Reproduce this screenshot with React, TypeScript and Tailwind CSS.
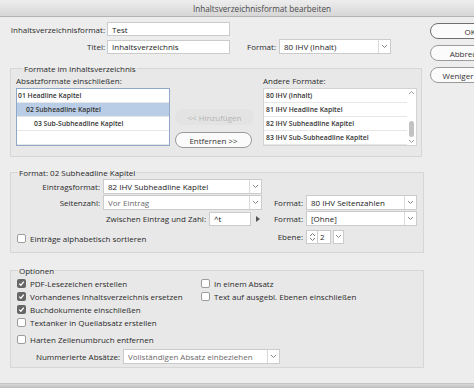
import React from "react";

const Chevron = ({ c = "#8a8a8a" }: { c?: string }) => (
  <svg width="7" height="5" viewBox="0 0 7 5">
    <path d="M1 1 L3.5 3.5 L6 1" fill="none" stroke={c} strokeWidth="1" />
  </svg>
);

const ChevronUp = ({ c = "#8a8a8a" }: { c?: string }) => (
  <svg width="7" height="5" viewBox="0 0 7 5">
    <path d="M1 4 L3.5 1.5 L6 4" fill="none" stroke={c} strokeWidth="1" />
  </svg>
);

function Select({ w, text, muted }: { w: string; text: string; muted?: boolean }) {
  return (
    <div className={`${w} h-[15px] flex bg-white border border-[#cbcbcb]`}>
      <div className={`flex-1 flex items-center pl-[4px] overflow-hidden whitespace-nowrap ${muted ? "text-[#6a6a6a]" : "text-[#222]"}`}>
        {text}
      </div>
      <div className="w-[12px] border-l border-[#dadada] flex items-center justify-center">
        <Chevron />
      </div>
    </div>
  );
}

function Input({ w, text }: { w: string; text: string }) {
  return (
    <div className={`${w} h-[14px] flex items-center pl-[4px] bg-white border border-[#cbcbcb] text-[#222] whitespace-nowrap`}>
      {text}
    </div>
  );
}

function Checkbox({ checked, label }: { checked?: boolean; label: string }) {
  return (
    <div className="flex items-center h-[13px] gap-[4px] whitespace-nowrap">
      {checked ? (
        <div className="w-[9px] h-[9px] rounded-[2px] bg-[#666] flex items-center justify-center">
          <svg width="7" height="7" viewBox="0 0 7 7">
            <path d="M1.2 3.6 L2.9 5.2 L5.8 1.6" fill="none" stroke="#fff" strokeWidth="1.3" />
          </svg>
        </div>
      ) : (
        <div className="w-[9px] h-[9px] rounded-[2px] bg-white border border-[#9d9d9d]" />
      )}
      <span>{label}</span>
    </div>
  );
}

function PillButton({ children, disabled, strong, w }: { children: React.ReactNode; disabled?: boolean; strong?: boolean; w: string }) {
  return (
    <div
      className={`${w} h-[16px] shrink-0 rounded-full flex items-center justify-center whitespace-nowrap ${
        disabled
          ? "bg-[#e3e3e3] text-[#b4b4b4]"
          : strong
          ? "bg-[#fbfbfb] border border-[#6f6f6f] text-[#333]"
          : "bg-[#fbfbfb] border border-[#9a9a9a] text-[#333]"
      }`}
    >
      {children}
    </div>
  );
}

function ListRow({ children, sel, pl }: { children?: React.ReactNode; sel?: boolean; pl: string }) {
  return (
    <div
      className={`h-[14px] flex items-center ${pl} border-b border-[#e6e6e6] whitespace-nowrap font-semibold text-[6.8px] text-[#333] ${
        sel ? "bg-[#b9cde6]" : ""
      }`}
    >
      {children}
    </div>
  );
}

export default function App() {
  return (
    <div className="w-[474px] h-[388px] overflow-hidden bg-[#ededed] flex flex-col font-['Open_Sans',sans-serif] text-[8px] text-[#2a2a2a] leading-[11px]">
      {/* title bar */}
      <div className="h-[17px] shrink-0 flex items-center justify-center pl-[50px] bg-gradient-to-b from-[#eeeeee] to-[#d6d6d6] border-b border-[#b3b3b3] text-[8.2px] text-[#4a4a4a] whitespace-nowrap">
        Inhaltsverzeichnisformat bearbeiten
      </div>

      <div className="flex flex-1">
        {/* left */}
        <div className="w-[424px] shrink-0 pl-[10px] pt-[5px]">
          <div className="flex items-center h-[14px]">
            <div className="w-[95px] text-right">Inhaltsverzeichnisformat:</div>
            <div className="ml-[2px]">
              <Input w="w-[123px]" text="Test" />
            </div>
          </div>
          <div className="flex items-center h-[15px] mt-[3px]">
            <div className="w-[95px] text-right">Titel:</div>
            <div className="ml-[2px]">
              <Input w="w-[123px]" text="Inhaltsverzeichnis" />
            </div>
            <div className="ml-[17px]">Format:</div>
            <div className="ml-[3px]">
              <Select w="w-[112px]" text="80 IHV (Inhalt)" />
            </div>
          </div>

          {/* group 1 */}
          <fieldset className="mt-[9px] w-[412px] border border-[#d6d6d6] bg-[#e8e8e8] pl-[5px] pb-[10px]">
            <legend className="ml-[7px] px-[1px] leading-[11px]">Formate im Inhaltsverzeichnis</legend>
            <div className="flex items-end">
              <div className="w-[154px]">
                <div className="h-[11px] mt-[1px] mb-[2px] whitespace-nowrap">Absatzformate einschließen:</div>
                <div className="h-[58px] bg-white border border-[#8fa7c9]">
                  <ListRow pl="pl-[1px]">01 Headline Kapitel</ListRow>
                  <ListRow pl="pl-[9px]" sel>
                    02 Subheadline Kapitel
                  </ListRow>
                  <ListRow pl="pl-[17px]">03 Sub-Subheadline Kapitel</ListRow>
                  <ListRow pl="pl-[1px]" />
                </div>
              </div>
              <div className="ml-[5px] w-[81px] flex flex-col gap-[7px] mb-[-2px]">
                <PillButton w="w-[79px]" disabled>
                  &lt;&lt; Hinzufügen
                </PillButton>
                <PillButton w="w-[77px]">Entfernen &gt;&gt;</PillButton>
              </div>
              <div className="ml-[7px] w-[154px]">
                <div className="h-[11px] mt-[1px] mb-[2px] whitespace-nowrap">Andere Formate:</div>
                <div className="h-[58px] bg-white border border-[#d3d3d3] flex">
                  <div className="flex-1">
                    <ListRow pl="pl-[2px]">80 IHV (Inhalt)</ListRow>
                    <ListRow pl="pl-[2px]">81 IHV Headline Kapitel</ListRow>
                    <ListRow pl="pl-[2px]">82 IHV Subheadline Kapitel</ListRow>
                    <ListRow pl="pl-[2px]">83 IHV Sub-Subheadline Kapitel</ListRow>
                  </div>
                  <div className="w-[9px] flex flex-col items-center justify-between py-[1px]">
                    <ChevronUp c="#9a9a9a" />
                    <div className="flex-1 flex flex-col justify-end pb-[2px]">
                      <div className="w-[5px] h-[16px] rounded-full bg-[#c2c2c2]" />
                    </div>
                    <Chevron c="#9a9a9a" />
                  </div>
                </div>
              </div>
            </div>
          </fieldset>

          {/* group 2 */}
          <fieldset className="mt-[10px] w-[414px] border border-[#d6d6d6] bg-[#e8e8e8] pt-[1px] pb-[8px]">
            <legend className="ml-[7px] px-[1px] leading-[11px]">Format: 02 Subheadline Kapitel</legend>
            <div className="flex items-center h-[15px]">
              <div className="w-[89px] text-right">Eintragsformat:</div>
              <div className="ml-[3px]">
                <Select w="w-[159px]" text="82 IHV Subheadline Kapitel" />
              </div>
            </div>
            <div className="flex items-center h-[15px] mt-[1px]">
              <div className="w-[89px] text-right">Seitenzahl:</div>
              <div className="ml-[3px]">
                <Select w="w-[159px]" text="Vor Eintrag" muted />
              </div>
              <div className="w-[41px] text-right">Format:</div>
              <div className="ml-[3px]">
                <Select w="w-[111px]" text="80 IHV Seitenzahlen" />
              </div>
            </div>
            <div className="flex items-center h-[15px] mt-[1px]">
              <div className="w-[195px] text-right whitespace-nowrap">Zwischen Eintrag und Zahl:</div>
              <div className="ml-[3px]">
                <Input w="w-[42px]" text="^t" />
              </div>
              <div className="w-[11px] flex justify-center pl-[2px]">
                <svg width="4" height="6" viewBox="0 0 4 6">
                  <path d="M0 0 L4 3 L0 6 Z" fill="#555" />
                </svg>
              </div>
              <div className="w-[41px] text-right">Format:</div>
              <div className="ml-[3px]">
                <Select w="w-[111px]" text="[Ohne]" />
              </div>
            </div>
            <div className="flex items-center h-[15px] mt-[3px]">
              <div className="w-[251px] pl-[6px] pt-[4px]">
                <Checkbox label="Einträge alphabetisch sortieren" />
              </div>
              <div className="w-[41px] text-right">Ebene:</div>
              <div className="ml-[3px] flex h-[14px]">
                <div className="w-[12px] bg-white border border-[#cbcbcb] flex flex-col items-center justify-center">
                  <ChevronUp c="#777" />
                  <Chevron c="#777" />
                </div>
                <div className="w-[13px] bg-white border-y border-r border-[#cbcbcb] flex items-center pl-[2px]">2</div>
                <div className="ml-[2px] w-[11px] bg-white border border-[#cbcbcb] flex items-center justify-center">
                  <Chevron />
                </div>
              </div>
            </div>
          </fieldset>

          {/* group 3 */}
          <fieldset className="mt-[12px] w-[414px] border border-[#d6d6d6] bg-[#e8e8e8] pt-[1px] pb-[3px]">
            <legend className="ml-[7px] px-[1px] leading-[11px]">Optionen</legend>
            <div className="flex">
              <div className="w-[190px] pl-[6px]">
                <Checkbox checked label="PDF-Lesezeichen erstellen" />
                <Checkbox checked label="Vorhandenes Inhaltsverzeichnis ersetzen" />
                <Checkbox checked label="Buchdokumente einschließen" />
                <Checkbox label="Textanker in Quellabsatz erstellen" />
              </div>
              <div>
                <Checkbox label="In einem Absatz" />
                <Checkbox label="Text auf ausgebl. Ebenen einschließen" />
              </div>
            </div>
            <div className="pl-[6px] mt-[4px]">
              <Checkbox label="Harten Zeilenumbruch entfernen" />
            </div>
            <div className="flex items-center h-[15px] mt-[3px]">
              <div className="w-[109px] text-right whitespace-nowrap">Nummerierte Absätze:</div>
              <div className="ml-[3px]">
                <Select w="w-[157px]" text="Vollständigen Absatz einbeziehen" muted />
              </div>
            </div>
          </fieldset>
        </div>

        {/* right buttons */}
        <div className="pl-[6px] pt-[6px] flex flex-col gap-[6px]">
          <PillButton w="w-[80px]" strong>
            OK
          </PillButton>
          <PillButton w="w-[80px]">Abbrechen</PillButton>
          <PillButton w="w-[62px]">Weniger «</PillButton>
        </div>
      </div>

      <div className="h-[5px] shrink-0 bg-gradient-to-b from-[#d9d9d9] to-[#bdbdbd] border-t border-[#c6c6c6]" />
    </div>
  );
}
